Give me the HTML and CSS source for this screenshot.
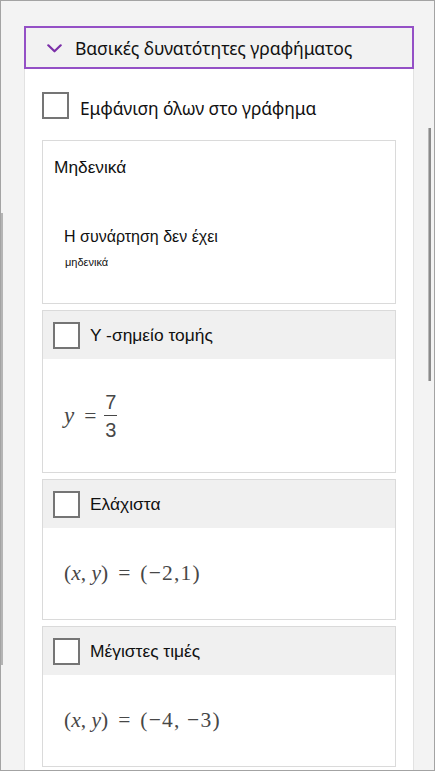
FILE: index.html
```html
<!DOCTYPE html>
<html lang="el">
<head>
<meta charset="utf-8">
<title>Βασικές δυνατότητες γραφήματος</title>
<link rel="stylesheet" href="styles.css">
</head>
<body>
<div class="window">
  <div class="edge-indicator"></div>
  <div class="scroll-thumb"></div>
  <div class="pane">
    <div class="pane-header">
      <svg class="chevron" width="15" height="9" viewBox="0 0 15 9" aria-hidden="true">
        <polyline points="1.3,1.3 7.5,7.3 13.7,1.3" fill="none" stroke="#7b2fa8" stroke-width="2.2" stroke-linecap="round" stroke-linejoin="round"/>
      </svg>
      <span class="pane-title">Βασικές δυνατότητες γραφήματος</span>
    </div>
    <div class="pane-body">
      <label class="show-all">
        <span class="checkbox"></span>
        <span class="show-all-text">Εμφάνιση όλων στο γράφημα</span>
      </label>

      <div class="card card-zeros">
        <div class="zeros-title">Μηδενικά</div>
        <div class="zeros-msg">Η συνάρτηση δεν έχει</div>
        <div class="zeros-sub">μηδενικά</div>
      </div>

      <div class="card">
        <div class="card-head">
          <span class="checkbox"></span>
          <span class="card-label">Y -σημείο τομής</span>
        </div>
        <div class="card-math tall">
          <span class="math"><i class="yv">y</i><span class="op">=</span><span class="frac"><span class="num">7</span><span class="den">3</span></span></span>
        </div>
      </div>

      <div class="card">
        <div class="card-head">
          <span class="checkbox"></span>
          <span class="card-label">Ελάχιστα</span>
        </div>
        <div class="card-math">
          <span class="math">(<i>x</i>, <i>y</i>)<span class="op">=</span><span class="val">(−2,1)</span></span>
        </div>
      </div>

      <div class="card">
        <div class="card-head">
          <span class="checkbox"></span>
          <span class="card-label">Μέγιστες τιμές</span>
        </div>
        <div class="card-math">
          <span class="math">(<i>x</i>, <i>y</i>)<span class="op">=</span><span class="val">(−4, −3)</span></span>
        </div>
      </div>
    </div>
  </div>
</div>
</body>
</html>
```
FILE: styles.css
```css
* { box-sizing: border-box; }

html, body {
  margin: 0;
  padding: 0;
  background: #f3f3f3;
}

.window {
  position: relative;
  width: 435px;
  height: 771px;
  border: 1px solid #a3a3a3;
  background: #f3f3f3;
  padding: 25px 0 0 23px;
  overflow: hidden;
  display: flex;
  flex-direction: column;
}

.edge-indicator {
  position: absolute;
  left: 0;
  top: 212px;
  width: 2px;
  height: 452px;
  background: #b4b4b4;
}

.scroll-thumb {
  position: absolute;
  left: 427px;
  top: 127px;
  width: 3px;
  height: 253px;
  background: #8a8a8a;
  border-left: 1px solid #b8b8b8;
}

.pane {
  width: 390px;
  flex: 1;
  display: flex;
  flex-direction: column;
}

.pane-header {
  height: 43px;
  border: 2px solid #9450c6;
  background: #f2f2f2;
  display: flex;
  align-items: center;
  padding-left: 21px;
  flex: none;
}

.chevron {
  display: block;
  flex: none;
  margin-top: 1px;
}

.pane-title {
  margin-left: 13px;
  font-family: "Noto Sans", "Open Sans", sans-serif;
  font-size: 17.6px;
  color: #111;
  letter-spacing: -0.1px;
}

.pane-body {
  flex: 1;
  background: #ffffff;
  border-left: 1px solid #e2e2e2;
  border-right: 1px solid #e2e2e2;
  padding: 23px 17px 0 17px;
}

.show-all {
  display: flex;
  align-items: center;
  height: 27px;
  margin-bottom: 21px;
}

.checkbox {
  display: block;
  flex: none;
  width: 27px;
  height: 27px;
  border: 2px solid #757575;
  background: #fff;
}

.show-all-text {
  margin-left: 11px;
  padding-top: 4px;
  font-family: "Noto Sans", "Open Sans", sans-serif;
  font-size: 17.4px;
  color: #111;
  letter-spacing: -0.1px;
}

.card {
  border: 1px solid #dadada;
  background: #fff;
  margin-bottom: 6px;
}

.card-zeros {
  height: 164px;
  padding: 15px 0 0 11px;
  font-family: "Liberation Sans", Arial, sans-serif;
  color: #111;
}

.zeros-title {
  font-size: 17.3px;
  line-height: 22px;
}

.zeros-msg {
  margin-top: 49px;
  margin-left: 10px;
  font-size: 16px;
  line-height: 20px;
}

.zeros-sub {
  margin-top: 8px;
  margin-left: 11px;
  font-size: 11px;
  line-height: 14px;
  color: #111;
}

.card-head {
  height: 48px;
  background: #f0f0f0;
  display: flex;
  align-items: center;
  padding-left: 10px;
}

.card-label {
  margin-left: 10px;
  font-family: "Liberation Sans", Arial, sans-serif;
  font-size: 17.4px;
  color: #111;
}

.card-math {
  height: 91px;
  display: flex;
  align-items: center;
  padding-left: 21px;
}

.card-math.tall {
  height: 113px;
  padding-top: 1px;
}

.math {
  font-family: "Liberation Serif", "DejaVu Serif", serif;
  font-size: 21.5px;
  color: #474747;
  display: inline-flex;
  align-items: center;
  white-space: pre;
}

.math i {
  font-style: italic;
}

.math i.yv {
  font-size: 23px;
}

.op {
  margin: 0 10px;
}

.val {
  letter-spacing: 1.2px;
}

.frac {
  display: inline-flex;
  flex-direction: column;
  align-items: center;
  font-family: "Liberation Sans", Arial, sans-serif;
  font-size: 20px;
  line-height: 20px;
  margin-left: -2px;
}

.frac .num {
  padding: 0 1px 3px;
  border-bottom: 1.5px solid #474747;
}

.frac .den {
  padding-top: 4px;
}
```
